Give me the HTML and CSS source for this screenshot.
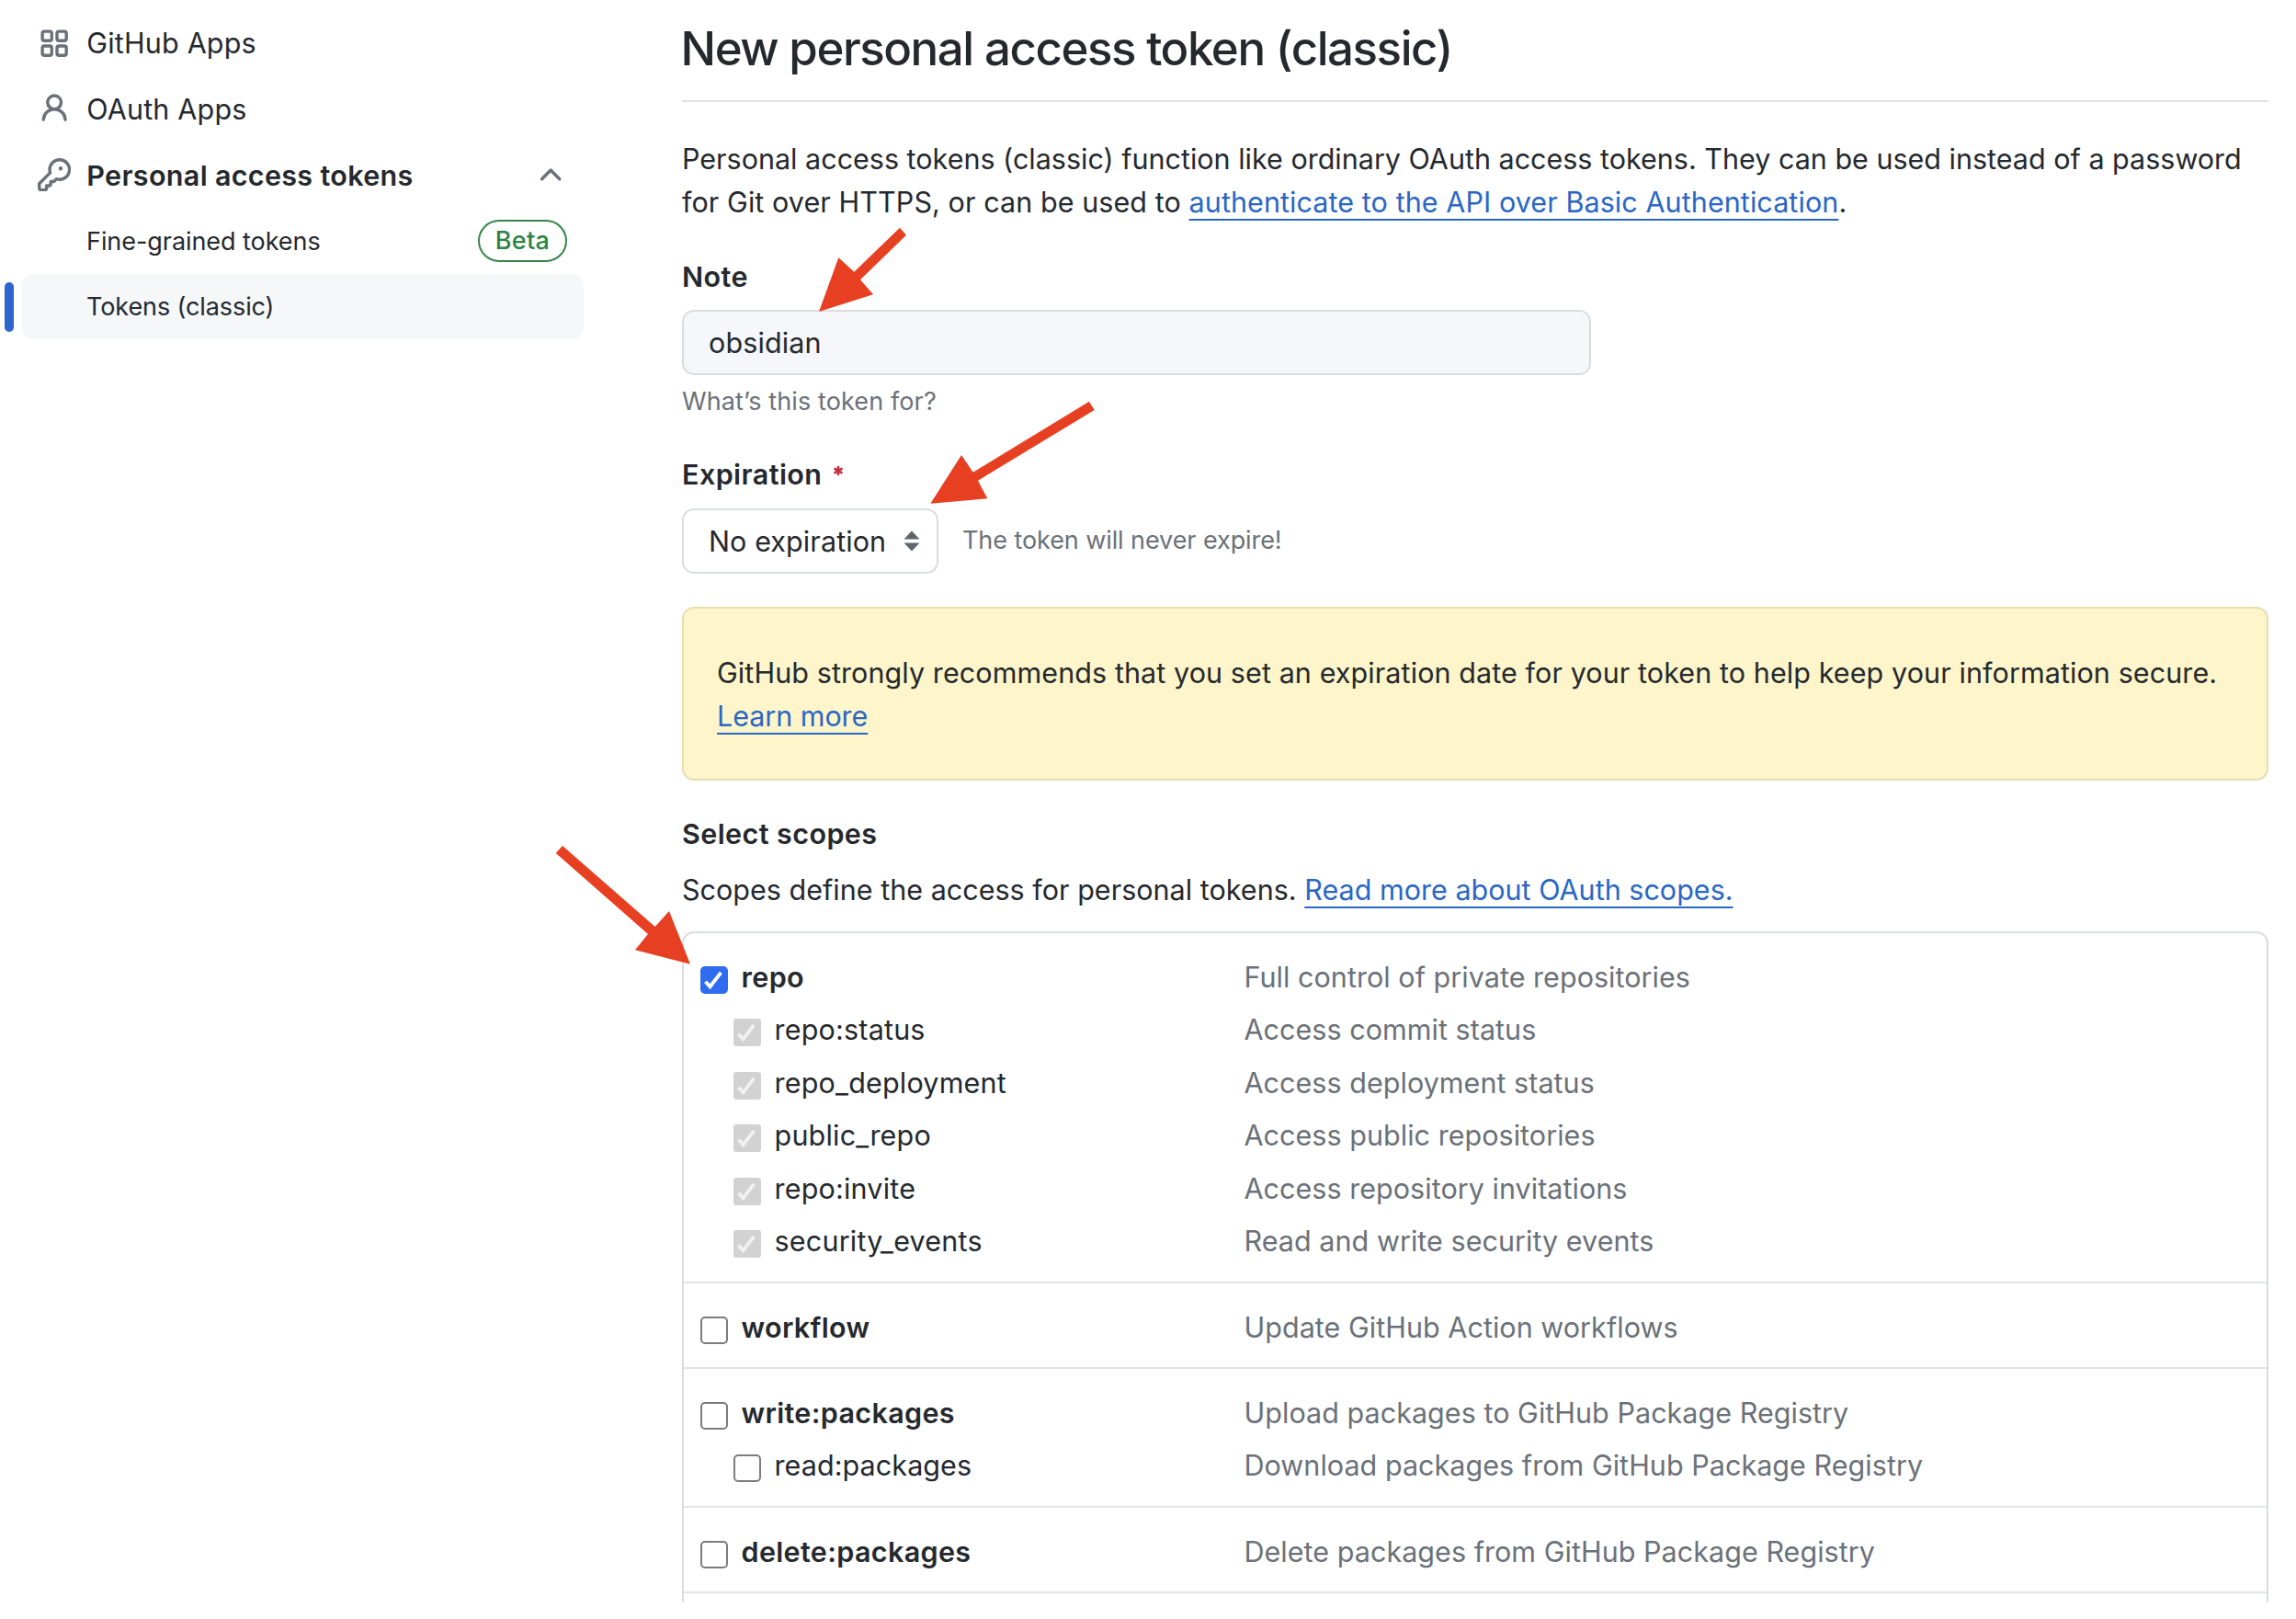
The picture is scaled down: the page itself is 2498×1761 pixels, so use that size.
FILE: index.html
```
<!DOCTYPE html>
<html lang="en">
<head>
<meta charset="utf-8">
<title>New personal access token (classic)</title>
<link rel="stylesheet" href="styles.css">
</head>
<body>
<svg class="defs" aria-hidden="true">
  <symbol id="tick" viewBox="0 0 29 29"><path d="M5.300 16.200 10.200 21.400 21.600 6.600"/></symbol>
</svg>
<div class="page">
  <nav class="sidebar">
    <a class="item">
      <svg class="icon icon-line" viewBox="0 0 16 16"><rect x="2.25" y="2.25" width="4.5" height="4.5" rx="1"/><rect x="9.25" y="2.25" width="4.5" height="4.5" rx="1"/><rect x="2.25" y="9.25" width="4.5" height="4.5" rx="1"/><rect x="9.25" y="9.25" width="4.5" height="4.5" rx="1"/></svg>
      <span>GitHub Apps</span>
    </a>
    <a class="item">
      <svg class="icon" viewBox="0 0 16 16"><path d="M10.561 8.073a6.005 6.005 0 0 1 3.432 5.142.75.75 0 1 1-1.498.07 4.5 4.5 0 0 0-8.99 0 .75.75 0 0 1-1.498-.07 6.004 6.004 0 0 1 3.431-5.142 3.999 3.999 0 1 1 5.123 0ZM10.5 5a2.5 2.5 0 1 0-5 0 2.5 2.5 0 0 0 5 0Z"/></svg>
      <span>OAuth Apps</span>
    </a>
    <a class="item item-open">
      <svg class="icon" viewBox="0 0 16 16"><path d="M10.5 0a5.499 5.499 0 1 1-1.288 10.848l-.932.932a.749.749 0 0 1-.53.22H7v.75a.749.749 0 0 1-.22.53l-.5.5a.749.749 0 0 1-.53.22H5v.75a.749.749 0 0 1-.22.53l-.5.5a.749.749 0 0 1-.53.22h-2A1.75 1.75 0 0 1 0 14.25v-2c0-.199.079-.389.22-.53l4.932-4.932A5.5 5.5 0 0 1 10.5 0Zm-4 5.5c-.001.431.069.86.205 1.269a.75.75 0 0 1-.181.768L1.5 12.56v1.69c0 .138.112.25.25.25h1.69l.06-.06v-1.19a.75.75 0 0 1 .75-.75h1.19l.06-.06v-1.19a.75.75 0 0 1 .75-.75h1.19l1.023-1.025a.75.75 0 0 1 .768-.18A4 4 0 1 0 6.5 5.5ZM11 6a1 1 0 1 1 0-2 1 1 0 0 1 0 2Z"/></svg>
      <span>Personal access tokens</span>
      <svg class="icon trailing" viewBox="0 0 16 16"><path d="M3.22 10.53a.749.749 0 0 1 0-1.06l4.25-4.25a.749.749 0 0 1 1.06 0l4.25 4.25a.749.749 0 1 1-1.06 1.06L8 6.811 4.28 10.53a.749.749 0 0 1-1.06 0Z"/></svg>
    </a>
    <a class="item subitem"><span>Fine-grained tokens</span><span class="pill trailing">Beta</span></a>
    <a class="item subitem selected"><span>Tokens (classic)</span></a>
  </nav>

  <main class="main">
    <h1 class="title">New personal access token (classic)</h1>
    <p class="intro"><span class="intro-lead">Personal access tokens (classic) function like ordinary OAuth access tokens. They can be used instead of a password</span><br>for Git over HTTPS, or can be used to <a class="link">authenticate to the API over Basic Authentication</a>.</p>

    <div class="label">Note</div>
    <div class="input">obsidian</div>
    <div class="hint">What’s this token for?</div>

    <div class="label label-expiration">Expiration <svg class="required" viewBox="0 0 12 12"><path d="M6 1v10M1.5 3.4l9 5.2M1.5 8.6l9-5.2"/></svg></div>
    <div class="expiration">
      <div class="select">No expiration <svg class="caret" viewBox="0 0 18 23"><path d="M9 .5 17.5 9.5H.5ZM9 22.5 17.5 13.500H.5Z"/></svg></div>
      <span class="expiry-note">The token will never expire!</span>
    </div>

    <div class="flash">GitHub strongly recommends that you set an expiration date for your token to help keep your information secure.<br><a class="link">Learn more</a></div>

    <div class="label label-scopes">Select scopes</div>
    <p class="scopes-intro">Scopes define the access for personal tokens. <a class="link">Read more about OAuth scopes.</a></p>

    <div class="scopes">
      <section class="group">
        <div class="row"><span class="box checked"><svg><use href="#tick"/></svg></span><b class="name">repo</b><span class="desc">Full control of private repositories</span></div>
        <div class="row sub"><span class="box disabled"><svg><use href="#tick"/></svg></span><span class="name">repo:status</span><span class="desc">Access commit status</span></div>
        <div class="row sub"><span class="box disabled"><svg><use href="#tick"/></svg></span><span class="name">repo_deployment</span><span class="desc">Access deployment status</span></div>
        <div class="row sub"><span class="box disabled"><svg><use href="#tick"/></svg></span><span class="name">public_repo</span><span class="desc">Access public repositories</span></div>
        <div class="row sub"><span class="box disabled"><svg><use href="#tick"/></svg></span><span class="name">repo:invite</span><span class="desc">Access repository invitations</span></div>
        <div class="row sub"><span class="box disabled"><svg><use href="#tick"/></svg></span><span class="name">security_events</span><span class="desc">Read and write security events</span></div>
      </section>
      <section class="group">
        <div class="row"><span class="box"></span><b class="name">workflow</b><span class="desc">Update GitHub Action workflows</span></div>
      </section>
      <section class="group">
        <div class="row row-tight"><span class="box"></span><b class="name">write:packages</b><span class="desc">Upload packages to GitHub Package Registry</span></div>
        <div class="row row-tight sub"><span class="box"></span><span class="name">read:packages</span><span class="desc">Download packages from GitHub Package Registry</span></div>
      </section>
      <section class="group">
        <div class="row"><span class="box"></span><b class="name">delete:packages</b><span class="desc">Delete packages from GitHub Package Registry</span></div>
      </section>
    </div>
  </main>

  <svg class="arrows" viewBox="0 0 2498 1743">
    <path d="M979 247.700 986 255.700 936 304.300 950 320.300 891 339 912.300 280.300 929.300 295.700Z"/>
    <path d="M1185 436.700 1190.700 446 1064 522.700 1074.300 542.300 1012.300 547.700 1046 495 1058.700 513.700Z"/>
    <path d="M612 920 604.700 928 705 1016 691 1033.300 751 1048.700 728 991 712.700 1008Z"/>
  </svg>
</div>
</body>
</html>
```
FILE: styles.css
```
* { box-sizing: border-box; }

body {
  margin: 0;
  background: #fff;
  color: #25292e;
  font-family: Inter, "Liberation Sans", sans-serif;
  font-size: 30.5px;
  letter-spacing: 0.08px;
}

.defs { display: none; }

.page {
  position: relative;
  display: grid;
  grid-template-columns: 742px 1726px;
  width: 2498px;
  height: 1743px;
  overflow: hidden;
}

/* Sidebar */
.sidebar { padding: 10.8px 0 0 24px; }

.item {
  display: flex;
  align-items: center;
  gap: 17px;
  width: 611px;
  height: 71.8px;
  padding: 0 18px 0 17px;
  letter-spacing: 0.18px;
  white-space: nowrap;
}

.item-open { font-weight: 600; letter-spacing: 0.32px; }

.icon { width: 36.300px; height: 36.300px; fill: #6b7178; flex: none; }
.icon-line { fill: none; stroke: #6b7178; stroke-width: 1.5; }
.trailing { margin-left: auto; }

.subitem {
  padding-left: 70px;
  font-size: 27px;
  letter-spacing: -0.06px;
}

.selected {
  position: relative;
  height: 71.5px;
  background: #f5f7f9;
  border-radius: 13px;
  letter-spacing: -0.1px;
}

.selected::before {
  content: "";
  position: absolute;
  left: -19px;
  top: 9px;
  width: 10px;
  height: 54px;
  border-radius: 5px;
  background: #2b66cf;
}

.pill {
  width: 97px;
  height: 46px;
  border: 2.300px solid #35854a;
  border-radius: 24px;
  color: #2b8443;
  font-weight: 500;
  letter-spacing: 0.3px;
  line-height: 42px;
  text-align: center;
}

/* Form */
.title {
  margin: 18px 0 0;
  padding-bottom: 22px;
  border-bottom: 2px solid #dfe1e4;
  font-size: 51px;
  font-weight: 450;
  line-height: 69px;
  letter-spacing: -1.44px;
  text-indent: -1.5px;
}

.intro { margin: 38px 0 0; line-height: 47px; white-space: nowrap; }
.intro-lead { letter-spacing: 0; }

.link {
  color: #2a67c4;
  text-decoration: underline;
  text-decoration-thickness: 2.300px;
  text-underline-offset: 7px;
  text-decoration-skip-ink: none;
}

.label {
  margin-top: 40px;
  line-height: 36px;
  font-weight: 600;
  letter-spacing: 0.42px;
}

.input {
  width: 989px;
  height: 71px;
  margin-top: 18px;
  padding-left: 27px;
  border: 2px solid #dadde0;
  border-radius: 13px;
  background: #f5f7fa;
  line-height: 67px;
  letter-spacing: 0.12px;
}

.hint {
  margin-top: 12.4px;
  font-size: 27px;
  line-height: 34px;
  letter-spacing: 0.12px;
  color: #6b7178;
}

.label-expiration { margin-top: 43.6px; display: flex; gap: 12px; }
.required { width: 12px; height: 12px; margin-top: 8px; fill: none; stroke: #c5303f; stroke-width: 2.6; }

.expiration { display: flex; gap: 26px; align-items: center; margin-top: 19px; height: 71px; }

.select {
  display: flex;
  align-items: center;
  justify-content: space-between;
  width: 279px;
  height: 71px;
  padding: 0 18px 0 27px;
  border: 2px solid #dadde0;
  border-radius: 13px;
  letter-spacing: 0.1px;
}

.caret { width: 18px; height: 23px; fill: #5f656b; }
.expiry-note { padding-bottom: 2px; font-size: 27px; letter-spacing: -0.08px; color: #6b7178; }

.flash {
  height: 189px;
  margin-top: 36px;
  padding: 46.400px 0 0 36px;
  border: 2px solid #e6deb0;
  border-radius: 13px;
  background: #fef6ca;
  line-height: 47px;
  letter-spacing: 0.09px;
  white-space: nowrap;
}
.flash .link { letter-spacing: -0.05px; }

.label-scopes { margin-top: 40px; }
.scopes-intro { margin: 19px 0 0; line-height: 47px; letter-spacing: 0.02px; }

/* Scope table */
.scopes {
  height: 760px;
  margin-top: 22px;
  border: 2px solid #dadde0;
  border-radius: 13px;
}

.group { padding: 18.500px 0 15.300px 18px; border-bottom: 2px solid #e2e4e6; }

.row {
  display: grid;
  grid-template-columns: 30px 546px 1fr;
  column-gap: 14.5px;
  align-items: center;
  height: 57.500px;
}

.row-tight { height: 56.5px; }
.row-tight:first-child { margin-top: 1px; }
.row-tight:last-child { margin-bottom: 1px; }

.sub { padding-left: 36px; grid-template-columns: 30px 510px 1fr; }
.desc { margin-left: -13.5px; color: #6b7178; letter-spacing: 0.04px; }
.name { letter-spacing: 0.2px; }
b.name { font-weight: 600; letter-spacing: 0.35px; }
.row-tight .name:not(b) { letter-spacing: 0.08px; }

.box {
  display: block;
  width: 30px;
  height: 30px;
  margin-top: 7px;
  border: 2px solid #7b7c7e;
  border-radius: 5px;
  background: #fff;
}

.box svg { display: block; width: 30px; height: 30px; fill: none; stroke: #fff; stroke-width: 3.8; }
.checked { border: 0; background: #2f6cf0; }
.disabled { border: 0; border-radius: 3px; background: #d2d2d2; }
.disabled svg { stroke: #f1f1f1; }

/* Red pointers laid over the form */
.arrows { position: absolute; left: 0; top: 0; width: 2498px; height: 1743px; fill: #e73f22; pointer-events: none; }
```
